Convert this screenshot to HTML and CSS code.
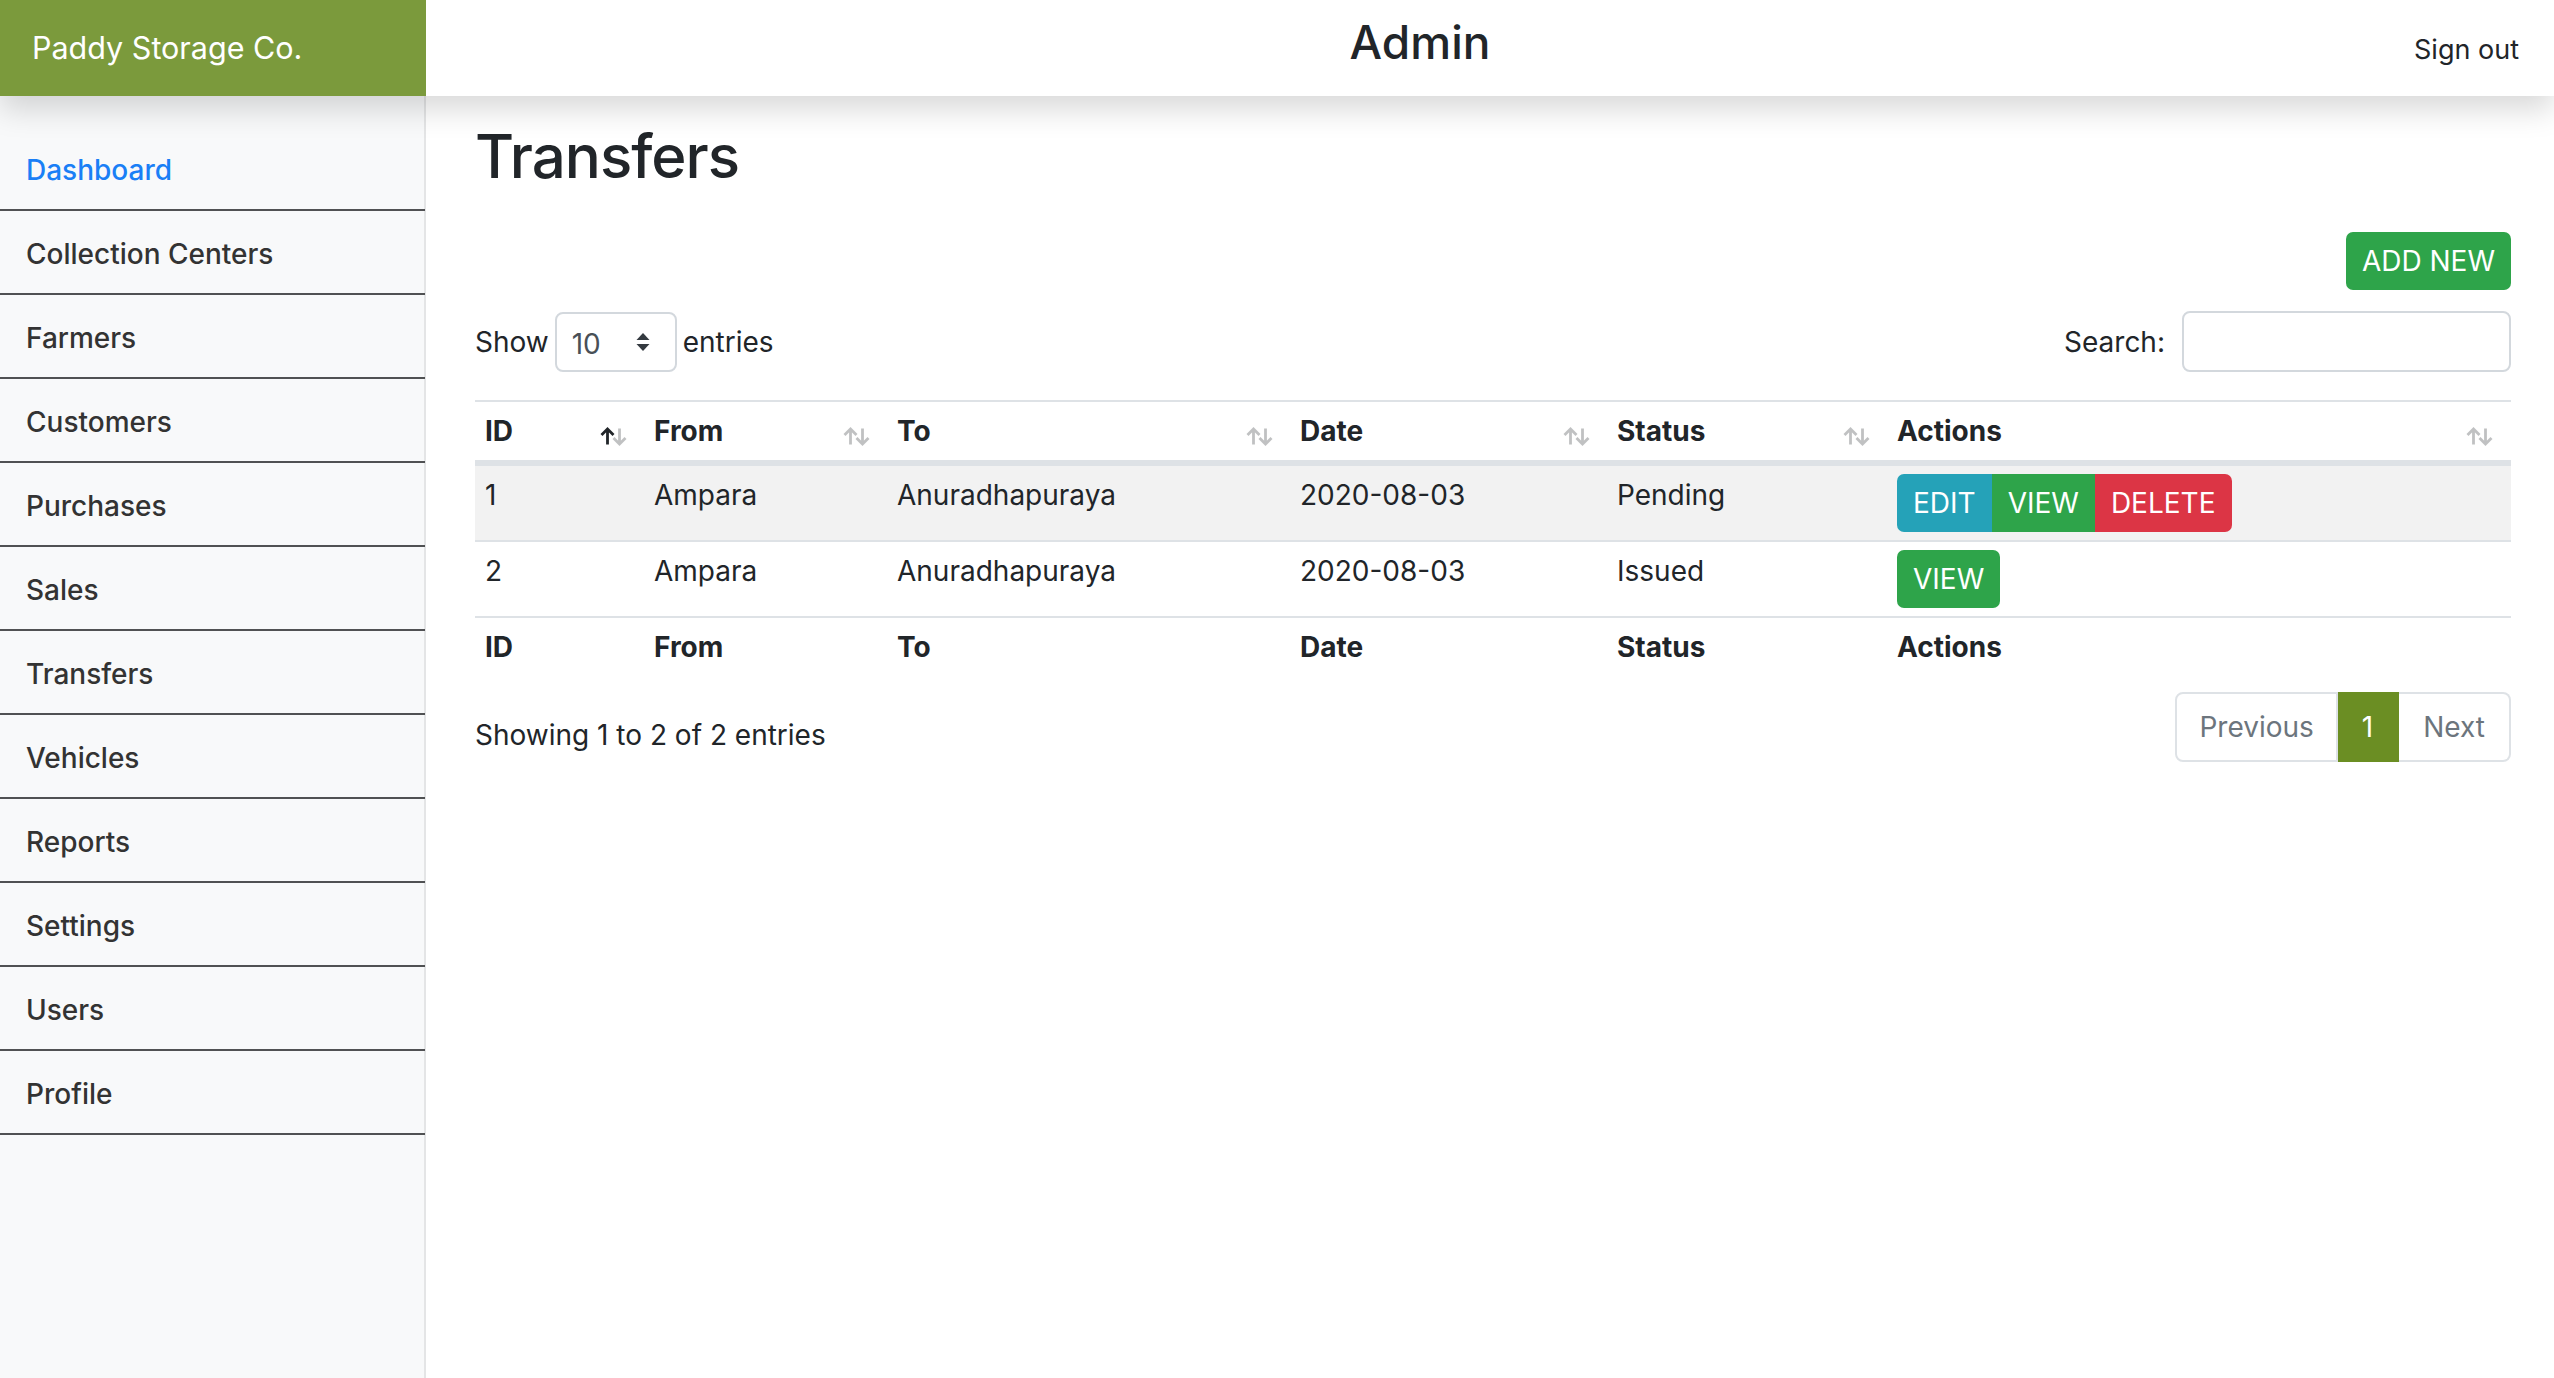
FILE: index.html
```html
<!DOCTYPE html>
<html lang="en">
<head>
<meta charset="utf-8">
<title>Transfers - Paddy Storage Co.</title>
<link rel="stylesheet" href="styles.css">
</head>
<body>
<header class="topbar">
  <div class="brand">Paddy Storage Co.</div>
  <div class="title">Admin</div>
  <a class="signout" href="#">Sign out</a>
</header>
<div class="layout">
  <nav class="sidebar">
    <ul class="nav">
      <li><a class="active" href="#">Dashboard</a></li>
      <li><a href="#">Collection Centers</a></li>
      <li><a href="#">Farmers</a></li>
      <li><a href="#">Customers</a></li>
      <li><a href="#">Purchases</a></li>
      <li><a href="#">Sales</a></li>
      <li><a href="#">Transfers</a></li>
      <li><a href="#">Vehicles</a></li>
      <li><a href="#">Reports</a></li>
      <li><a href="#">Settings</a></li>
      <li><a href="#">Users</a></li>
      <li><a href="#">Profile</a></li>
    </ul>
  </nav>
  <main class="main">
    <h1 class="page-title">Transfers</h1>
    <div class="toolbar">
      <a class="btn btn-success btn-add" href="#">ADD NEW</a>
    </div>
    <div class="controls">
      <label class="length">Show
        <span class="select"><span class="select-val">10</span>
          <svg class="select-arrows" width="16" height="20" viewBox="0 0 16 20"><path d="M8 1 L14.5 8 H1.5 Z" fill="#343a40"/><path d="M8 19 L14.5 12 H1.5 Z" fill="#343a40"/></svg>
        </span>
        entries</label>
      <label class="search">Search:<span class="search-input"></span></label>
    </div>
    <table class="table">
      <colgroup>
        <col class="c-id"><col class="c-from"><col class="c-to"><col class="c-date"><col class="c-status"><col class="c-actions">
      </colgroup>
      <thead>
        <tr>
          <th>ID<span class="sort"><svg class="up on" width="15" height="18" viewBox="0 0 15 18"><path d="M7.5 17.5 V2 M1.5 8 L7.5 2 L13.5 8" fill="none" stroke="currentColor" stroke-width="2.8"/></svg><svg class="down" width="15" height="18" viewBox="0 0 15 18"><path d="M7.5 0.5 V16 M1.5 10 L7.5 16 L13.5 10" fill="none" stroke="currentColor" stroke-width="2.8"/></svg></span></th>
          <th>From<span class="sort"><svg class="up" width="15" height="18" viewBox="0 0 15 18"><path d="M7.5 17.5 V2 M1.5 8 L7.5 2 L13.5 8" fill="none" stroke="currentColor" stroke-width="2.8"/></svg><svg class="down" width="15" height="18" viewBox="0 0 15 18"><path d="M7.5 0.5 V16 M1.5 10 L7.5 16 L13.5 10" fill="none" stroke="currentColor" stroke-width="2.8"/></svg></span></th>
          <th>To<span class="sort"><svg class="up" width="15" height="18" viewBox="0 0 15 18"><path d="M7.5 17.5 V2 M1.5 8 L7.5 2 L13.5 8" fill="none" stroke="currentColor" stroke-width="2.8"/></svg><svg class="down" width="15" height="18" viewBox="0 0 15 18"><path d="M7.5 0.5 V16 M1.5 10 L7.5 16 L13.5 10" fill="none" stroke="currentColor" stroke-width="2.8"/></svg></span></th>
          <th>Date<span class="sort"><svg class="up" width="15" height="18" viewBox="0 0 15 18"><path d="M7.5 17.5 V2 M1.5 8 L7.5 2 L13.5 8" fill="none" stroke="currentColor" stroke-width="2.8"/></svg><svg class="down" width="15" height="18" viewBox="0 0 15 18"><path d="M7.5 0.5 V16 M1.5 10 L7.5 16 L13.5 10" fill="none" stroke="currentColor" stroke-width="2.8"/></svg></span></th>
          <th>Status<span class="sort"><svg class="up" width="15" height="18" viewBox="0 0 15 18"><path d="M7.5 17.5 V2 M1.5 8 L7.5 2 L13.5 8" fill="none" stroke="currentColor" stroke-width="2.8"/></svg><svg class="down" width="15" height="18" viewBox="0 0 15 18"><path d="M7.5 0.5 V16 M1.5 10 L7.5 16 L13.5 10" fill="none" stroke="currentColor" stroke-width="2.8"/></svg></span></th>
          <th>Actions<span class="sort"><svg class="up" width="15" height="18" viewBox="0 0 15 18"><path d="M7.5 17.5 V2 M1.5 8 L7.5 2 L13.5 8" fill="none" stroke="currentColor" stroke-width="2.8"/></svg><svg class="down" width="15" height="18" viewBox="0 0 15 18"><path d="M7.5 0.5 V16 M1.5 10 L7.5 16 L13.5 10" fill="none" stroke="currentColor" stroke-width="2.8"/></svg></span></th>
        </tr>
      </thead>
      <tbody>
        <tr class="odd">
          <td>1</td><td>Ampara</td><td>Anuradhapuraya</td><td>2020-08-03</td><td>Pending</td>
          <td><div class="btn-group"><a class="btn btn-info" href="#">EDIT</a><a class="btn btn-success" href="#">VIEW</a><a class="btn btn-danger" href="#">DELETE</a></div></td>
        </tr>
        <tr>
          <td>2</td><td>Ampara</td><td>Anuradhapuraya</td><td>2020-08-03</td><td>Issued</td>
          <td><div class="btn-group"><a class="btn btn-success" href="#">VIEW</a></div></td>
        </tr>
      </tbody>
      <tfoot>
        <tr><th>ID</th><th>From</th><th>To</th><th>Date</th><th>Status</th><th>Actions</th></tr>
      </tfoot>
    </table>
    <div class="footer-row">
      <div class="info">Showing 1 to 2 of 2 entries</div>
      <ul class="pagination">
        <li class="page disabled first"><a href="#">Previous</a></li>
        <li class="page active"><a href="#">1</a></li>
        <li class="page disabled last"><a href="#">Next</a></li>
      </ul>
    </div>
  </main>
</div>
</body>
</html>
```
FILE: styles.css
```css
* { box-sizing: border-box; }
html, body { margin: 0; padding: 0; }
body {
  font-family: Inter, "Noto Sans", "Liberation Sans", sans-serif;
  color: #212529;
  background: #fff;
  font-size: 28px;
  line-height: 42px;
  min-height: 1378px;
}
a { text-decoration: none; color: inherit; }

.topbar {
  display: flex;
  height: 96px;
  background: #fff;
  position: relative;
  z-index: 2;
  box-shadow: 0 14px 28px rgba(0,0,0,.15);
}
.brand {
  width: 426px;
  flex: none;
  background: #7b9a3c;
  color: #fff;
  font-size: 30.5px;
  line-height: 96px;
  padding-left: 32px;
}
.title {
  flex: 1;
  text-align: center;
  font-size: 46px;
  line-height: 84px;
  font-weight: 500;
}
.signout {
  font-size: 27px;
  line-height: 96px;
  padding-top: 2px;
  padding-right: 35px;
  color: #212529;
}

.layout {
  display: flex;
  min-height: 1282px;
}
.sidebar {
  width: 426px;
  flex: none;
  background: #f8f9fa;
  box-shadow: inset -2px 0 0 rgba(0,0,0,.08);
  padding-top: 31px;
}
.nav { list-style: none; margin: 0; padding: 0; }
.nav li { border-bottom: 2px solid #505153; margin-right: 1px; }
.nav a {
  display: block;
  padding: 22px 26px 18px;
  font-weight: 500;
  color: #333;
}
.nav a.active { color: #1a7ff6; }

.main {
  flex: 1;
  padding: 0 43px 0 49px;
}
.page-title {
  margin: 23px 0 0;
  font-size: 60px;
  line-height: 74px;
  font-weight: 500;
  letter-spacing: -1px;
}
.toolbar {
  display: flex;
  justify-content: flex-end;
  margin-top: 39px;
}
.btn {
  display: inline-block;
  color: #fff;
  line-height: 42px;
  padding: 8px 16px;
  font-size: 28px;
}
.btn-add { border-radius: 7px; }
.btn-success { background: #2ea44a; }
.btn-info { background: #25a2b8; }
.btn-danger { background: #dc3545; }

.controls {
  display: flex;
  justify-content: space-between;
  align-items: center;
  margin-top: 21px;
  height: 61px;
}
.length, .search { display: flex; align-items: center; }
.select {
  display: flex;
  align-items: center;
  justify-content: space-between;
  width: 122px;
  height: 60px;
  margin: 0 6px 0 6px;
  padding: 0 24px 0 15px;
  border: 2px solid #d3d8dd;
  border-radius: 8px;
  color: #495057;
}
.select-val { padding-top: 4px; }
.search-input {
  display: block;
  width: 329px;
  height: 61px;
  margin-left: 17px;
  border: 2px solid #d3d8dd;
  border-radius: 8px;
}

.table {
  width: 100%;
  margin-top: 28px;
  border-collapse: separate;
  border-spacing: 0;
  table-layout: fixed;
}
.c-id { width: 170px; }
.c-from { width: 243px; }
.c-to { width: 403px; }
.c-date { width: 317px; }
.c-status { width: 280px; }
.table th, .table td {
  text-align: left;
  vertical-align: top;
  padding: 8px 8px 8px 9px;
}
.table th { font-weight: 700; }
.table thead th {
  position: relative;
  border-top: 2px solid #dee2e6;
  border-bottom: 6px solid #dee2e6;
}
.table tbody tr + tr td { border-top: 2px solid #dee2e6; }
.table tbody tr.odd td { background: #f2f2f2; }
.table tfoot th { border-top: 2px solid #dee2e6; }
.table tbody td:first-child, .table th:first-child { padding-left: 10px; }

.sort {
  position: absolute;
  right: 17px;
  top: 25px;
  width: 28px;
  height: 18px;
  color: #212529;
}
.sort svg { position: absolute; top: 0; opacity: .28; }
.sort .up { left: 0; }
.sort .down { left: 12px; top: 1px; }
.sort svg.on { opacity: 1; }

.btn-group { display: flex; }
.btn-group .btn:first-child { border-radius: 7px 0 0 7px; }
.btn-group .btn:last-child { border-radius: 0 7px 7px 0; }
.btn-group .btn:only-child { border-radius: 7px; }

.footer-row {
  display: flex;
  justify-content: space-between;
  align-items: flex-start;
  margin-top: 16px;
}
.info { padding-top: 22px; }
.pagination {
  display: flex;
  list-style: none;
  margin: 0;
  padding: 0;
}
.page a {
  display: block;
  line-height: 34px;
  padding: 16px 24px;
  border: 2px solid #dee2e6;
  color: #6c757d;
}
.page.first a { padding: 16px 22px; }
.page + .page a { border-left: none; }
.page.first a { border-radius: 8px 0 0 8px; }
.page.last a { border-radius: 0 8px 8px 0; }
.page.active a {
  background: #6b8e23;
  border-color: #6b8e23;
  color: #fff;
}
```
